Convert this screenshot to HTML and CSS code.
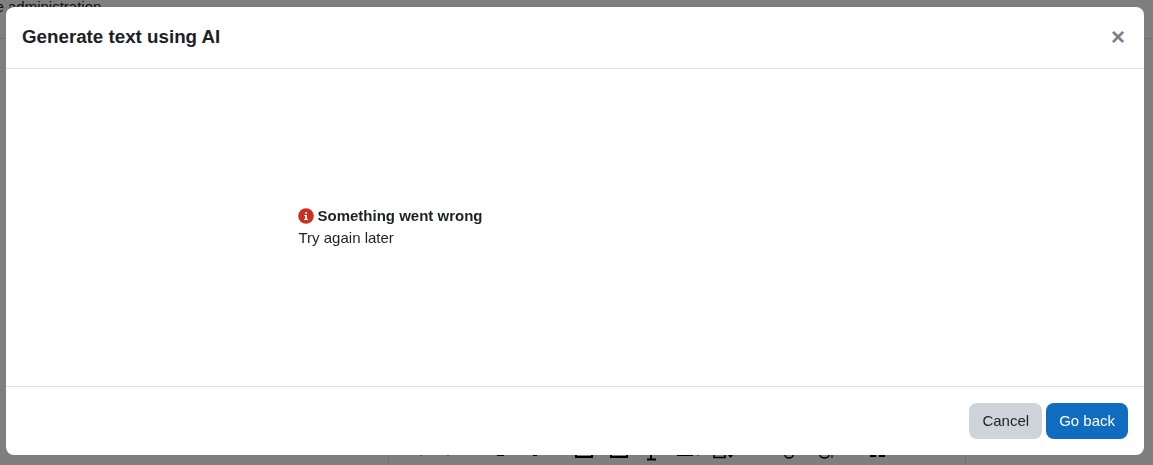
FILE: index.html
```html
<!DOCTYPE html>
<html lang="en">
<head>
<meta charset="utf-8">
<title>Generate text using AI</title>
<link rel="stylesheet" href="styles.css">
</head>
<body>
<div class="page">
  <div class="page-head"><span class="page-title">Site administration</span></div>
  <div class="editor">
    <svg class="toolbar" width="576" height="10" viewBox="0 0 576 10" fill="none" stroke="#000" stroke-width="2">
      <path stroke-width="1" stroke="#333" d="M32 0v1M59 0v1"/>
      <path d="M108 0h7M144 0h4"/>
      <path d="M187 0v2h16V0M222 0v2h16V0"/>
      <path d="M262 0v4"/>
      <path d="M258 4.500h9"/>
      <path d="M288 0h16"/>
      <path stroke-width="1" stroke="#333" d="M309 0v1"/>
      <path stroke-width="1.500" d="M325 0v2.500h11V0"/>
      <path stroke="none" fill="#000" d="M339 0h5l-2.500 3z"/>
      <path stroke-width="1.500" d="M396 0a4 3 0 0 0 8 0M431 0a4.500 3 0 0 0 9 0"/>
      <path stroke-width="1" d="M443 0v3"/>
      <path d="M481 1h6M490 1h6"/>
    </svg>
  </div>
</div>
<div class="backdrop"></div>
<div class="modal" role="dialog">
  <header class="modal-header">
    <h5 class="modal-title">Generate text using AI</h5>
    <span class="close">&times;</span>
  </header>
  <div class="modal-body">
    <div class="message">
      <div class="message-title">
        <svg class="info" width="16" height="16" viewBox="0 0 16 16"><circle cx="8" cy="8" r="7.800" fill="#ca3120"/><path d="M6.200 7h2.800v3.900h1v1.100H6v-1.100h1.200V8h-1zM7.200 4.200h1.800v1.600H7.200z" fill="#fff"/></svg>
        <strong>Something went wrong</strong>
      </div>
      <div>Try again later</div>
    </div>
  </div>
  <footer class="modal-footer">
    <button class="btn btn-secondary">Cancel</button>
    <button class="btn btn-primary">Go back</button>
  </footer>
</div>
</body>
</html>
```
FILE: styles.css
```css
html, body {
  margin: 0;
  height: 100%;
  overflow: hidden;
}
body {
  font-family: "Liberation Sans", Arial, sans-serif;
  font-size: 15px;
  line-height: 22px;
  color: #1d2125;
  background: #fff;
}
.page {
  height: 465px;
  display: flex;
  flex-direction: column;
}
.page-head {
  height: 38px;
  border-bottom: 1px solid #dee2e6;
  overflow: hidden;
}
.page-title {
  display: block;
  margin: -1px 0 0 -22px;
  font-size: 15px;
  line-height: 15px;
  white-space: nowrap;
}
.editor {
  margin: 416px 0 0 388px;
  width: 578px;
  height: 10px;
  box-sizing: border-box;
  border-left: 1px solid #dee2e6;
  border-right: 1px solid #dee2e6;
  flex: none;
}
.toolbar {
  display: block;
}
.backdrop {
  position: fixed;
  inset: 0;
  background: rgba(0, 0, 0, .5);
}
.modal {
  position: fixed;
  left: 6px;
  top: 7px;
  width: 1138px;
  height: 448px;
  display: flex;
  flex-direction: column;
  background: #fff;
  border-radius: 8px;
}
.modal-header {
  height: 62px;
  flex: none;
  box-sizing: border-box;
  padding: 0 19px 2px 16px;
  display: flex;
  align-items: center;
  justify-content: space-between;
  border-bottom: 1px solid #dee2e6;
}
.modal-title {
  margin: 0;
  font-size: 18.75px;
  line-height: 28px;
  font-weight: 700;
}
.close {
  font-size: 24px;
  font-weight: 700;
  line-height: 1;
  color: #808080;
}
.modal-body {
  flex: 1;
  display: flex;
  align-items: center;
  padding: 0 0 2px 292.5px;
}
.message-title {
  display: flex;
  align-items: center;
  gap: 3.5px;
}
.info {
  flex: none;
  margin-left: -0.5px;
}
.modal-footer {
  height: 69px;
  flex: none;
  box-sizing: border-box;
  padding: 16px;
  display: flex;
  align-items: flex-start;
  justify-content: flex-end;
  gap: 4px;
  border-top: 1px solid #dee2e6;
}
.btn {
  height: 36px;
  padding: 0 13px;
  border: 0;
  border-radius: 8px;
  font: inherit;
}
.btn-secondary {
  background: #ced4da;
  color: #1d2125;
}
.btn-primary {
  background: #0f6cbf;
  color: #fff;
}
```
